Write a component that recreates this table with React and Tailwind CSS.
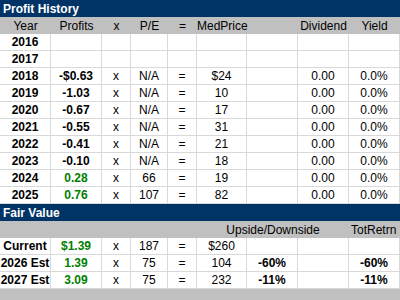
const COLS = 'grid grid-cols-[51px_51px_29px_37px_29px_50px_51px_51px_51px]'

const history = [
  { year: '2016' },
  { year: '2017' },
  { year: '2018', profit: '-$0.63', pe: 'N/A', price: '$24' },
  { year: '2019', profit: '-1.03', pe: 'N/A', price: '10' },
  { year: '2020', profit: '-0.67', pe: 'N/A', price: '17' },
  { year: '2021', profit: '-0.55', pe: 'N/A', price: '31' },
  { year: '2022', profit: '-0.41', pe: 'N/A', price: '21' },
  { year: '2023', profit: '-0.10', pe: 'N/A', price: '18' },
  { year: '2024', profit: '0.28', pe: '66', price: '19', green: true },
  { year: '2025', profit: '0.76', pe: '107', price: '82', green: true },
]

const fair = [
  { label: 'Current', profit: '$1.39', pe: '187', price: '$260' },
  { label: '2026 Est', profit: '1.39', pe: '75', price: '104', up: '-60%', tot: '-60%' },
  { label: '2027 Est', profit: '3.09', pe: '75', price: '232', up: '-11%', tot: '-11%' },
]

function Cell({ children, className = '' }) {
  return (
    <div className={'flex h-[17px] items-center justify-center whitespace-nowrap border-b border-r border-[#d9d9d9] ' + className}>
      {children}
    </div>
  )
}

function Band({ title }) {
  return (
    <div className="flex h-[17px] items-center bg-[#003366] pl-[3px] font-bold text-white">{title}</div>
  )
}

export default function App() {
  return (
    <div className="h-[300px] w-[400px] overflow-hidden bg-white text-[12px] leading-none text-black" style={{ fontFamily: '"Liberation Sans", Arial, sans-serif' }}>
      <Band title="Profit History" />
      <div className={COLS + ' h-[17px] items-center bg-[#c0c0c0] text-center'}>
        <span>Year</span>
        <span>Profits</span>
        <span>x</span>
        <span>P/E</span>
        <span>=</span>
        <span>MedPrice</span>
        <span></span>
        <span>Dividend</span>
        <span>Yield</span>
      </div>
      {history.map((r) => (
        <div key={r.year} className={COLS}>
          <Cell className="font-bold">{r.year}</Cell>
          <Cell className={'font-bold ' + (r.green ? 'text-[#008000]' : '')}>{r.profit}</Cell>
          <Cell>{r.profit ? 'x' : ''}</Cell>
          <Cell>{r.pe}</Cell>
          <Cell>{r.profit ? '=' : ''}</Cell>
          <Cell>{r.price}</Cell>
          <Cell></Cell>
          <Cell>{r.profit ? '0.00' : ''}</Cell>
          <Cell>{r.profit ? '0.0%' : ''}</Cell>
        </div>
      ))}
      <Band title="Fair Value" />
      <div className={COLS + ' h-[17px] items-center bg-[#c0c0c0]'}>
        <span className="col-span-5"></span>
        <span className="col-span-3 text-center">Upside/Downside</span>
        <span className="pl-[2px]">TotRetrn</span>
      </div>
      {fair.map((r) => (
        <div key={r.label} className={COLS}>
          <Cell className="font-bold">{r.label}</Cell>
          <Cell className="font-bold text-[#008000]">{r.profit}</Cell>
          <Cell>x</Cell>
          <Cell>{r.pe}</Cell>
          <Cell>=</Cell>
          <Cell>{r.price}</Cell>
          <Cell className="font-bold">{r.up}</Cell>
          <Cell></Cell>
          <Cell className="font-bold">{r.tot}</Cell>
        </div>
      ))}
      <div className="h-[11px] bg-[#c0c0c0]"></div>
    </div>
  )
}
